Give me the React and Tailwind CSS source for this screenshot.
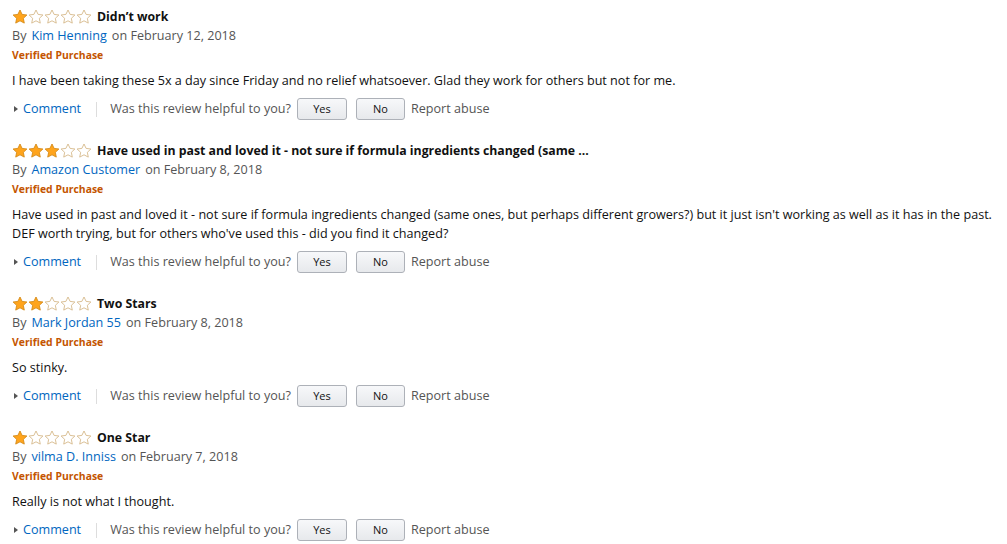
import React from 'react'

const reviews = [
  {
    stars: 1,
    title: 'Didn’t work',
    author: 'Kim Henning',
    date: 'February 12, 2018',
    body: ['I have been taking these 5x a day since Friday and no relief whatsoever. Glad they work for others but not for me.'],
  },
  {
    stars: 3,
    title: 'Have used in past and loved it - not sure if formula ingredients changed (same ...',
    author: 'Amazon Customer',
    date: 'February 8, 2018',
    body: [
      "Have used in past and loved it - not sure if formula ingredients changed (same ones, but perhaps different growers?) but it just isn't working as well as it has in the past.",
      "DEF worth trying, but for others who've used this - did you find it changed?",
    ],
  },
  {
    stars: 2,
    title: 'Two Stars',
    author: 'Mark Jordan 55',
    date: 'February 8, 2018',
    body: ['So stinky.'],
  },
  {
    stars: 1,
    title: 'One Star',
    author: 'vilma D. Inniss',
    date: 'February 7, 2018',
    body: ['Really is not what I thought.'],
  },
]

function Star({ filled }) {
  return (
    <svg width="16" height="16" viewBox="0 0 16 16">
      <path
        d="M8 1l2.1 4.4 4.8.6-3.55 3.3.92 4.8L8 11.8l-4.27 2.3.92-4.8L1.1 6l4.8-.6z"
        fill={filled ? '#ffa41c' : '#ffffff'}
        stroke={filled ? '#d58a17' : '#d6b98a'}
        strokeWidth="0.9"
        strokeLinejoin="round"
      />
    </svg>
  )
}

function Review({ review }) {
  return (
    <div className="mb-[20px]">
      <div className="flex items-center h-[20px]">
        <div className="flex">
          {[1, 2, 3, 4, 5].map((n) => (
            <Star key={n} filled={n <= review.stars} />
          ))}
        </div>
        <span className="ml-[5px] text-[12.3px] font-bold text-[#111]">{review.title}</span>
      </div>
      <div className="flex items-center h-[19px] text-[#555]">
        <span>By</span>
        <span className="ml-[5px] text-[#0066c0]">{review.author}</span>
        <span className="ml-[5px]">on {review.date}</span>
      </div>
      <div className="flex items-center h-[20px] text-[10.4px] font-bold text-[#c45500]">Verified Purchase</div>
      <div className="mt-[5px] leading-[19px] text-[#111] whitespace-nowrap">
        {review.body.map((line, i) => (
          <div key={i}>{line}</div>
        ))}
      </div>
      <div className="mt-[7px] flex items-center h-[24px]">
        <svg width="6" height="8" viewBox="0 0 6 8" className="ml-[1px]">
          <path d="M1 1l4 3-4 3z" fill="#555" />
        </svg>
        <span className="ml-[4px] text-[#0066c0]">Comment</span>
        <span className="ml-[15px] w-px h-[15px] bg-[#ddd]" />
        <span className="ml-[13px] text-[#555]">Was this review helpful to you?</span>
        <button className="ml-[6px] w-[50px] h-[22px] rounded-[3px] border border-[#adb1b8] bg-gradient-to-b from-[#f7f8fa] to-[#e7e9ec] text-[11px] text-[#111]">
          Yes
        </button>
        <button className="ml-[9px] w-[49px] h-[22px] rounded-[3px] border border-[#adb1b8] bg-gradient-to-b from-[#f7f8fa] to-[#e7e9ec] text-[11px] text-[#111]">
          No
        </button>
        <span className="ml-[6px] text-[#555]">Report abuse</span>
      </div>
    </div>
  )
}

export default function App() {
  return (
    <div className="w-[1007px] h-[544px] bg-white overflow-hidden pt-[7px] pl-[12px] text-[12.6px] font-['Open_Sans',sans-serif]">
      {reviews.map((r, i) => (
        <Review key={i} review={r} />
      ))}
    </div>
  )
}
